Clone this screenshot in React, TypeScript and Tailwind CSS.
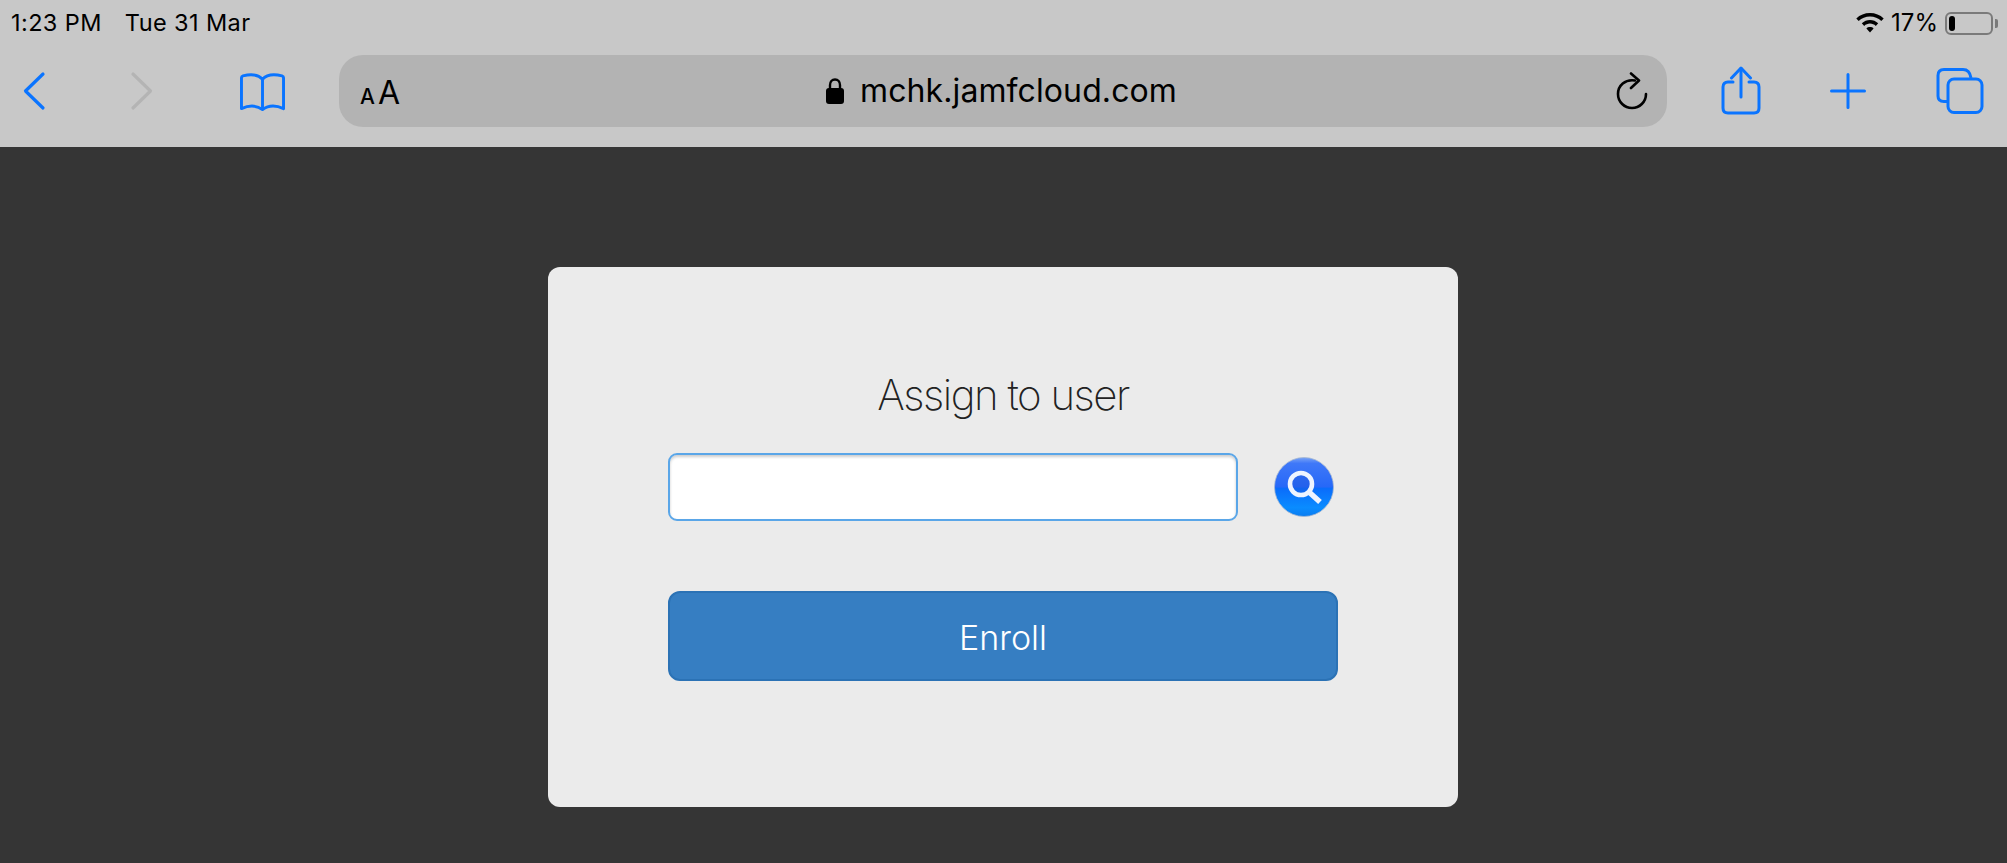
import React from "react";

const blue = "#0a74ff";

function Chevron({ dir, color }: { dir: "l" | "r"; color: string }) {
  return (
    <svg width="24" height="40" viewBox="0 0 24 40" fill="none">
      <path d={dir === "l" ? "M21 3 L3.5 20 L21 37" : "M3 3 L20.5 20 L3 37"} stroke={color} strokeWidth="3.2" strokeLinecap="round" strokeLinejoin="round" />
    </svg>
  );
}

function Book() {
  return (
    <svg width="45" height="40" viewBox="0 0 46 40" fill="none" stroke={blue} strokeWidth="3" strokeLinejoin="round" strokeLinecap="round">
      <path d="M23 7 C19 2.5 11 1.5 3 3.5 C2 3.8 1.5 4.5 1.5 5.5 L1.5 37 C9 33.5 17 33.5 23 38 C29 33.5 37 33.5 44.5 37 L44.5 5.5 C44.5 4.5 44 3.8 43 3.5 C35 1.5 27 2.5 23 7 Z" />
      <path d="M23 7 L23 37" />
    </svg>
  );
}

function Reload() {
  return (
    <svg width="32" height="38" viewBox="0 0 32 38" fill="none" stroke="#000" strokeWidth="2.6" strokeLinecap="round" strokeLinejoin="round">
      <path d="M19 8.5 C9 7 2 13.5 2 22 C2 30 8.5 36 16 36 C23.5 36 30 30 30 22" />
      <path d="M15 1.5 L23 8.5 L15 16" />
    </svg>
  );
}

function Share() {
  return (
    <svg width="40" height="49" viewBox="0 0 40 49" fill="none" stroke={blue} strokeWidth="3" strokeLinecap="round" strokeLinejoin="round">
      <path d="M12 16 L7 16 C3.7 16 2 17.7 2 21 L2 42 C2 45.3 3.7 47 7 47 L33 47 C36.3 47 38 45.3 38 42 L38 21 C38 17.7 36.3 16 33 16 L28 16" />
      <path d="M20 31 L20 2.5" />
      <path d="M10.5 12 L20 2 L29.5 12" />
    </svg>
  );
}

function Plus() {
  return (
    <svg width="36" height="36" viewBox="0 0 36 36" fill="none" stroke={blue} strokeWidth="3" strokeLinecap="round">
      <path d="M18 1.5 L18 34.5 M1.5 18 L34.5 18" />
    </svg>
  );
}

function Tabs() {
  return (
    <svg width="48" height="46" viewBox="0 0 48 46" fill="none" stroke={blue} strokeWidth="3" strokeLinejoin="round">
      <path d="M11 33.5 L8 33.5 C4 33.5 2 31.5 2 28 L2 7.5 C2 3.5 4 1.5 8 1.5 L27 1.5 C31 1.5 34 3.5 35 10" />
      <rect x="12" y="11" width="34" height="33.5" rx="6" />
    </svg>
  );
}

function Wifi() {
  return (
    <svg width="28" height="20" viewBox="0 0 28 20" fill="#000">
      <path d="M14 0 C19.3 0 24.1 2 27.7 5.4 L25.3 8 C22.3 5.2 18.4 3.6 14 3.6 C9.6 3.6 5.7 5.2 2.7 8 L0.3 5.4 C3.9 2 8.7 0 14 0 Z" />
      <path d="M14 7 C17 7 20 8.2 22.2 10.3 L19.8 12.9 C18.2 11.5 16.2 10.6 14 10.6 C11.8 10.6 9.8 11.5 8.2 12.9 L5.8 10.3 C8 8.2 11 7 14 7 Z" />
      <path d="M14 14 C15.4 14 16.7 14.5 17.6 15.4 L14 19.6 L10.4 15.4 C11.3 14.5 12.6 14 14 14 Z" />
    </svg>
  );
}

function Battery() {
  return (
    <div className="flex items-center">
      <div className="flex h-[23px] w-[48px] items-center rounded-[6px] border-2 border-[#7a7a7a] pl-[2px]">
        <div className="h-[15px] w-[6px] rounded-[3px] bg-black" />
      </div>
      <div className="ml-[2px] h-[9px] w-[3px] rounded-r-[2px] bg-[#7a7a7a]" />
    </div>
  );
}

function Lock() {
  return (
    <svg width="18" height="26" viewBox="0 0 18 26" fill="none">
      <path d="M4 12 L4 7 C4 3.6 6 1.5 9 1.5 C12 1.5 14 3.6 14 7 L14 12" stroke="#000" strokeWidth="2.4" />
      <rect x="0" y="10" width="18" height="16" rx="3" fill="#000" />
    </svg>
  );
}

function SearchBadge() {
  return (
    <svg width="60" height="60" viewBox="0 0 60 60">
      <defs>
        <linearGradient id="sb" x1="0" y1="0" x2="0" y2="1">
          <stop offset="0" stopColor="#7aa4f5" />
          <stop offset="0.1" stopColor="#3f78f8" />
          <stop offset="0.5" stopColor="#2668f8" />
          <stop offset="0.52" stopColor="#0a6cfb" />
          <stop offset="0.85" stopColor="#0a8cff" />
          <stop offset="1" stopColor="#0a7cf0" />
        </linearGradient>
      </defs>
      <circle cx="30" cy="30" r="29.5" fill="url(#sb)" stroke="#a6b8d0" strokeWidth="0.8" />
      <circle cx="27" cy="27" r="11" fill="#1f55d8" fillOpacity="0.35" stroke="#eef4ff" strokeWidth="4.6" />
      <path d="M35 35 L46 45" stroke="#eef4ff" strokeWidth="5.4" />
    </svg>
  );
}

export default function App() {
  return (
    <div className="flex h-[863px] w-[2007px] flex-col overflow-hidden bg-[#353535] font-['Inter','Liberation_Sans',sans-serif] text-black">
      <header className="h-[147px] shrink-0 bg-[#c8c8c8]">
        <div className="flex h-[46px] items-start justify-between pl-[11px] pr-[9px] pt-[8px]">
          <div className="flex gap-[23px] text-[23.5px] leading-[30px] tracking-[0.4px]">
            <span>1:23 PM</span>
            <span>Tue 31 Mar</span>
          </div>
          <div className="flex items-center gap-[7px]">
            <Wifi />
            <span className="text-[24px] leading-[30px]">17%</span>
            <Battery />
          </div>
        </div>
        <div className="flex h-[90px] items-center">
          <div className="ml-[22px] w-[24px]"><Chevron dir="l" color={blue} /></div>
          <div className="ml-[84px] w-[24px]"><Chevron dir="r" color="#b4b4b4" /></div>
          <div className="ml-[86px] mt-[2px] w-[46px]"><Book /></div>
          <div className="ml-[53px] grid h-[72px] w-[1328px] grid-cols-[1fr_auto_1fr] items-center rounded-[24px] bg-[#b3b3b3] pl-[21px] pr-[24px]">
            <div className="flex items-baseline gap-[3px] pt-[3px]">
              <span className="text-[21px] font-medium leading-none">A</span>
              <span className="text-[32px] leading-none">A</span>
            </div>
            <div className="flex items-center gap-[16px]">
              <Lock />
              <span className="text-[32px] leading-none tracking-[0.1px]">mchk.jamfcloud.com</span>
            </div>
            <div className="mr-[-5px] flex justify-end"><Reload /></div>
          </div>
          <div className="ml-[54px] mb-[1px] w-[40px]"><Share /></div>
          <div className="ml-[69px] w-[36px]"><Plus /></div>
          <div className="ml-[70px]"><Tabs /></div>
        </div>
      </header>

      <main className="flex flex-1 justify-center pt-[120px]">
        <div className="ml-[-1px] flex h-[540px] w-[910px] flex-col items-center rounded-[12px] bg-[#ebebeb] pt-[100px]">
          <h1 className="h-[56px] text-[42px] font-extralight leading-[56px] tracking-[-1.5px] text-[#222]">Assign to user</h1>
          <div className="mt-[30px] flex w-[670px] items-center">
            <input
              type="text"
              className="h-[68px] w-[570px] rounded-[9px] border-2 border-[#5aa6e8] bg-white shadow-[inset_0_2px_3px_rgba(0,0,0,0.2)] outline-none"
            />
            <div className="ml-[36px]"><SearchBadge /></div>
          </div>
          <button className="mt-[70px] h-[90px] w-[670px] rounded-[12px] border-2 border-[#2b72b5] bg-[#367ec2] pt-[2px] text-[34px] font-[350] text-white">
            Enroll
          </button>
        </div>
      </main>
    </div>
  );
}
